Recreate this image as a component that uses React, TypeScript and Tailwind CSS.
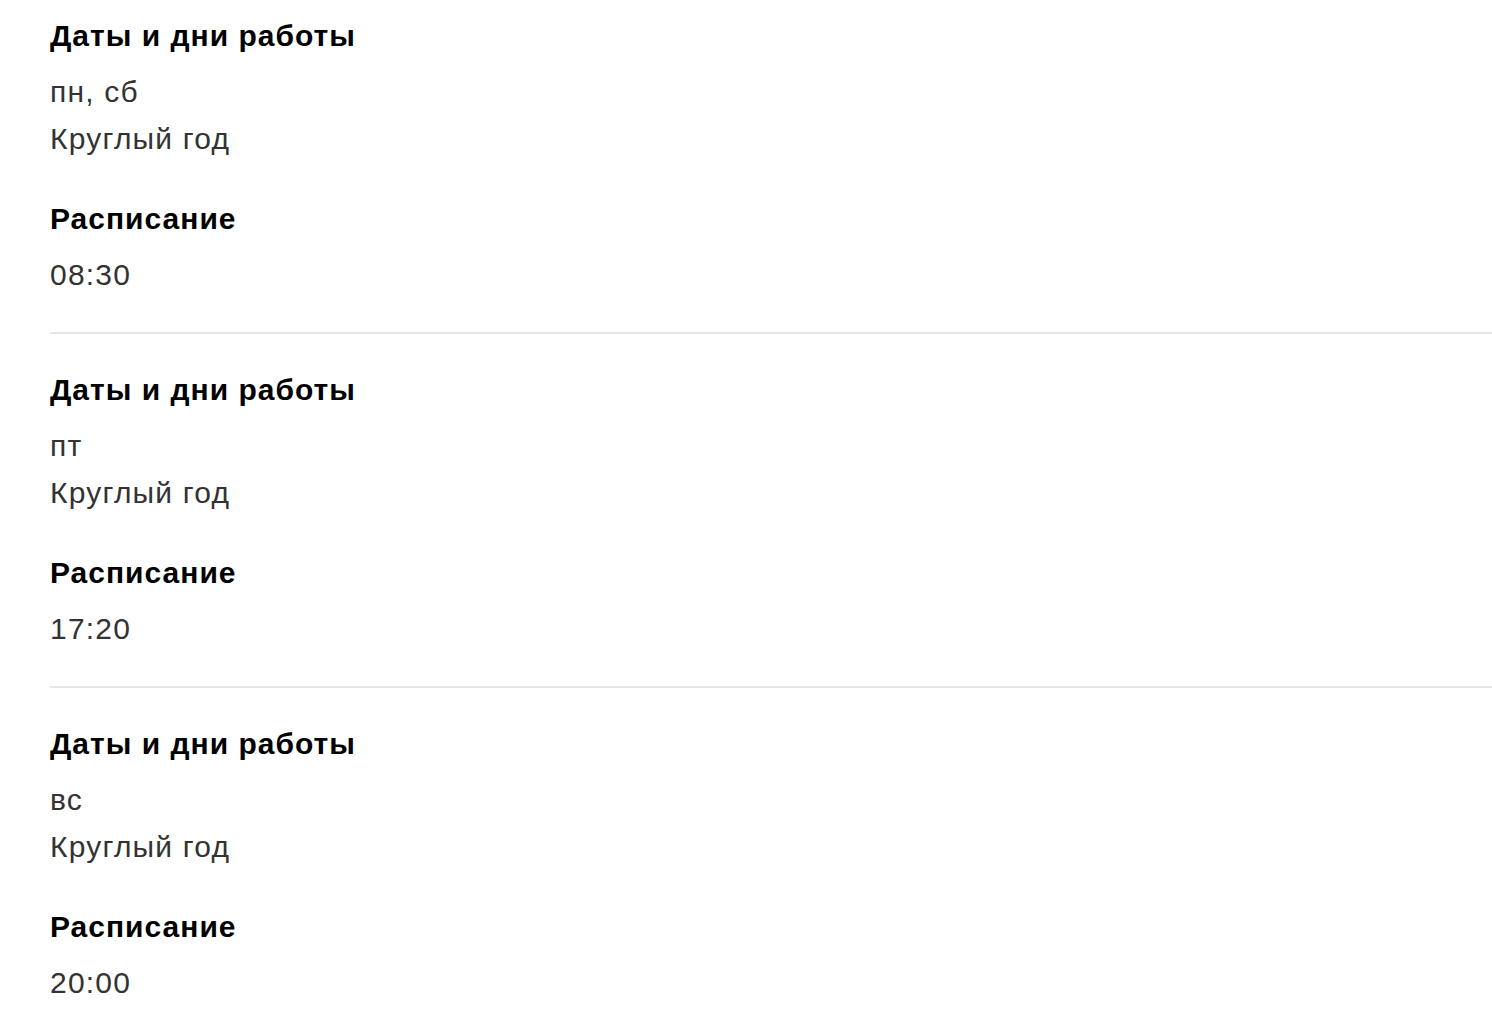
import React from 'react';

interface ScheduleItem {
  days: string;
  period: string;
  time: string;
}

const items: ScheduleItem[] = [
  { days: 'пн, сб', period: 'Круглый год', time: '08:30' },
  { days: 'пт', period: 'Круглый год', time: '17:20' },
  { days: 'вс', period: 'Круглый год', time: '20:00' },
];

const App: React.FC = () => {
  return (
    <div className="min-h-screen bg-white pl-[50px] font-['Liberation_Sans',Arial,sans-serif]">
      {items.map((item, i) => (
        <div
          key={i}
          className={`${i === 0 ? 'pt-[12px]' : 'pt-[32px]'} ${
            i < items.length - 1 ? 'border-b-2 border-[#e6e6e6] pb-[34px]' : ''
          }`}
        >
          {/* Days block */}
          <h3 className="text-[30px] leading-[47px] font-bold tracking-[1px] text-black">Даты и дни работы</h3>
          <div className="mt-[9px] text-[30px] leading-[47px] tracking-[1.2px] text-[#333333]">
            <p>{item.days}</p>
            <p>{item.period}</p>
          </div>

          {/* Time block */}
          <h3 className="mt-[33px] text-[30px] leading-[47px] font-bold tracking-[1px] text-black">Расписание</h3>
          <div className="mt-[9px] text-[30px] leading-[47px] tracking-[1.2px] text-[#333333]">
            <p>{item.time}</p>
          </div>
        </div>
      ))}
    </div>
  );
};

export default App;
